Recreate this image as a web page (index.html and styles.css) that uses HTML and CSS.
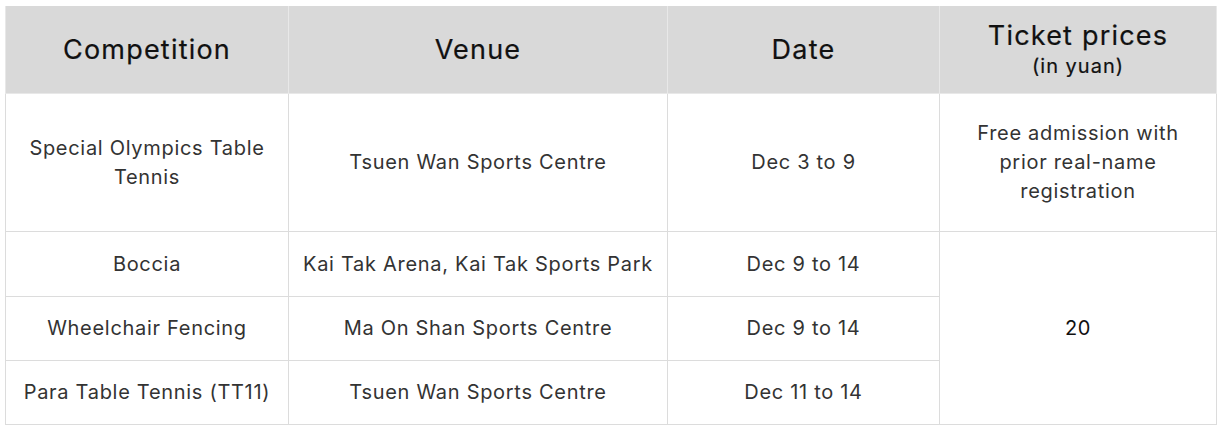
FILE: index.html
```html
<!DOCTYPE html>
<html>
<head>
<meta charset="utf-8">
<link rel="stylesheet" href="styles.css">
</head>
<body>
<table class="tickets">
  <colgroup>
    <col class="c1"><col class="c2"><col class="c3"><col class="c4">
  </colgroup>
  <thead>
    <tr class="head">
      <th>Competition</th>
      <th>Venue</th>
      <th>Date</th>
      <th>Ticket prices<br><span class="sub">(in yuan)</span></th>
    </tr>
  </thead>
  <tbody>
    <tr class="tall">
      <td>Special Olympics Table Tennis</td>
      <td>Tsuen Wan Sports Centre</td>
      <td>Dec 3 to 9</td>
      <td class="note">Free admission with prior real-name registration</td>
    </tr>
    <tr class="row first">
      <td>Boccia</td>
      <td>Kai Tak Arena, Kai Tak Sports Park</td>
      <td>Dec 9 to 14</td>
      <td rowspan="3" class="price">20</td>
    </tr>
    <tr class="row">
      <td>Wheelchair Fencing</td>
      <td>Ma On Shan Sports Centre</td>
      <td>Dec 9 to 14</td>
    </tr>
    <tr class="row">
      <td>Para Table Tennis (TT11)</td>
      <td>Tsuen Wan Sports Centre</td>
      <td>Dec 11 to 14</td>
    </tr>
  </tbody>
</table>
</body>
</html>
```
FILE: styles.css
```css
html, body {
  margin: 0;
  padding: 0;
  background: #ffffff;
}
body {
  padding: 6px 0 0 5px;
  font-family: Inter, "Open Sans", sans-serif;
}
.tickets {
  border-collapse: collapse;
  table-layout: fixed;
  width: 1211px;
}
.c1 { width: 283px; }
.c2 { width: 379px; }
.c3 { width: 272px; }
.c4 { width: 277px; }
.tickets th,
.tickets td {
  border: 1px solid #dcdcdc;
  text-align: center;
  vertical-align: middle;
  padding: 0 10px;
}
.head th {
  background: #d9d9d9;
  color: #111111;
  font-weight: 400;
  font-size: 27px;
  line-height: 28px;
  letter-spacing: 1.2px;
  height: 87px;
  border-color: #e8e8e8;
  border-top: none;
  -webkit-text-stroke: 0.2px #111111;
}
.head th .sub {
  font-size: 20px;
  line-height: 24px;
  letter-spacing: 1px;
}
.tickets td {
  color: #333333;
  font-size: 20px;
  line-height: 29px;
  letter-spacing: 0.7px;
  font-weight: 400;
}
.tickets td.note {
  padding: 0 22px;
}
.tall td { height: 137px; }
.row td { height: 63px; }
.row.first td { height: 64px; }
.tickets .price { color: #111111; }
```
